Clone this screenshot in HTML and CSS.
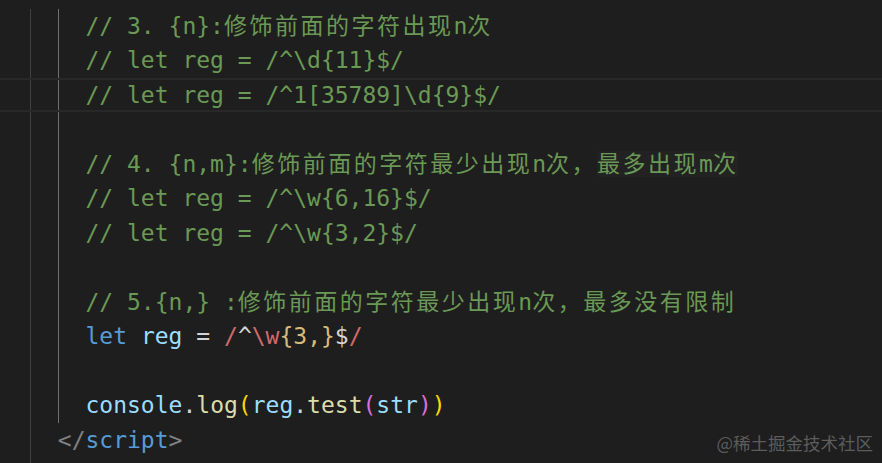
FILE: index.html
```html
<!DOCTYPE html>
<html lang="zh">
<head>
<meta charset="utf-8">
<title>editor</title>
<link rel="stylesheet" href="styles.css">
</head>
<body>
<div class="editor">
  <div class="line g2"><span>      </span><span class="cm">// 3. {n}:<span class="cj">修饰前面的字符出现</span>n<span class="cj">次</span></span></div>
  <div class="line g2"><span>      </span><span class="cm">// let reg = /^\d{11}$/</span></div>
  <div class="line g2 cur"><span>      </span><span class="cm">// let reg = /^1[35789]\d{9}$/</span></div>
  <div class="line g2"> </div>
  <div class="line g2"><span>      </span><span class="cm">// 4. {n,m}:<span class="cj">修饰前面的字符最少出现</span>n<span class="cj">次，</span><span class="hl"><span class="cj">最多出现</span>m<span class="cj">次</span></span></span></div>
  <div class="line g2"><span>      </span><span class="cm">// let reg = /^\w{6,16}$/</span></div>
  <div class="line g2"><span>      </span><span class="cm">// let reg = /^\w{3,2}$/</span></div>
  <div class="line g2"> </div>
  <div class="line g2"><span>      </span><span class="cm">// 5.{n,} :<span class="cj">修饰前面的字符最少出现</span>n<span class="cj">次，最多没有限制</span></span></div>
  <div class="line g2"><span>      </span><span class="kw">let</span> <span class="var">reg</span> <span class="op">=</span> <span class="re">/</span><span class="an">^</span><span class="re">\w</span><span class="qt">{3,}</span><span class="an">$</span><span class="re">/</span></div>
  <div class="line g2"> </div>
  <div class="line g2"><span>      </span><span class="var">console</span><span class="op">.</span><span class="fn">log</span><span class="b1">(</span><span class="var">reg</span><span class="op">.</span><span class="fn">test</span><span class="b2">(</span><span class="var">str</span><span class="b2">)</span><span class="b1">)</span></div>
  <div class="line g1"><span>    </span><span class="tg">&lt;/</span><span class="kw">script</span><span class="tg">&gt;</span></div>
  <div class="line g1"> </div>
</div>
<div class="wm">@稀土掘金技术社区</div>
</body>
</html>
```
FILE: styles.css
```css
html, body {
  margin: 0;
  padding: 0;
  background: #1e1e1e;
  width: 882px;
  height: 463px;
  overflow: hidden;
}

.editor {
  box-sizing: border-box;
  height: 463px;
  overflow: hidden;
  padding-top: 8.5px;
  padding-left: 2.4px;
  font-family: "DejaVu Sans Mono", "Noto Sans CJK SC", monospace;
  font-size: 23px;
  color: #d4d4d4;
}

.line {
  height: 34.5px;
  line-height: 34.5px;
  white-space: pre;
  margin-left: -2.4px;
  padding-left: 2.4px;
}

.g2 {
  background-image: linear-gradient(90deg,
    transparent 30px, #404040 30px, #404040 31px,
    transparent 31px, transparent 58px,
    #707070 58px, #707070 59px, transparent 59px);
}

.g1 {
  background-image: linear-gradient(90deg,
    transparent 30px, #404040 30px, #404040 31px, transparent 31px);
}

.cur {
  box-shadow: inset 0 2px 0 #282828, inset 0 -2px 0 #282828;
}

.cj {
  font-family: "Noto Sans CJK SC", sans-serif;
  letter-spacing: 2.5px;
  line-height: 20px;
}

.hl {
  background: #222222;
}

.cm { color: #6a9955; }
.kw { color: #569cd6; }
.var { color: #9cdcfe; }
.op { color: #d4d4d4; }
.re { color: #d16969; }
.an { color: #d4d4d4; }
.qt { color: #d7ba7d; }
.fn { color: #dcdcaa; }
.b1 { color: #ffd700; }
.b2 { color: #da70d6; }
.tg { color: #808080; }

.wm {
  position: absolute;
  right: 9px;
  top: 430px;
  font-family: "Noto Sans CJK SC", sans-serif;
  font-size: 17.5px;
  color: rgba(255, 255, 255, 0.28);
  line-height: 26px;
}
```
